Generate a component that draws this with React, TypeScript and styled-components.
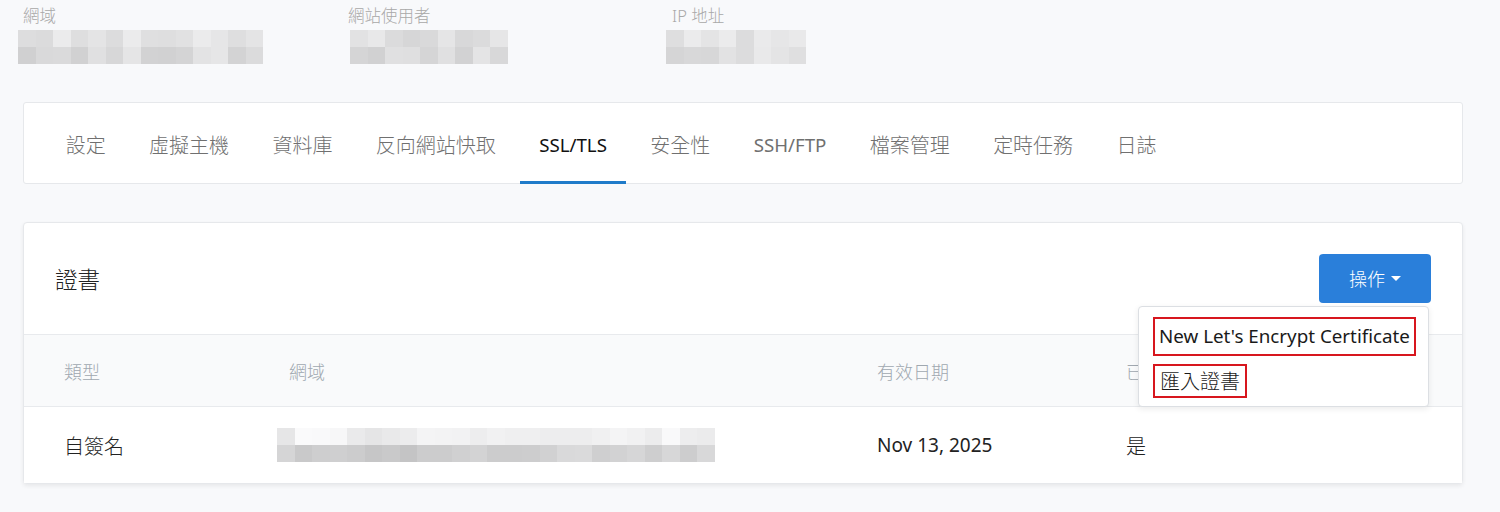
import { styled, createGlobalStyle } from 'styled-components';

const GlobalStyle = createGlobalStyle`
  html, body {
    margin: 0;
    padding: 0;
    background: #f8f9fb;
  }
  body {
    font-family: "Noto Sans", "Noto Sans CJK TC", sans-serif;
    color: #333;
  }
  * {
    box-sizing: border-box;
  }
`;

const Page = styled.div`
  width: 1500px;
  height: 512px;
  padding-left: 23px;
  padding-right: 37px;
  overflow: hidden;
`;

const InfoRow = styled.div`
  display: flex;
  flex-direction: row;
  padding-top: 4px;
  height: 102px;
`;

const InfoItem = styled.div<{ $width: number }>`
  width: ${(p) => p.$width}px;
  display: flex;
  flex-direction: column;
  row-gap: 2px;
`;

const InfoLabel = styled.div`
  font-size: 16.5px;
  line-height: 24px;
  color: #a8a8a8;
  font-weight: 300;
`;

const BlurGrid = styled.div<{ $cols: number; $cell: number; $shift: number }>`
  display: grid;
  grid-template-columns: repeat(${(p) => p.$cols}, ${(p) => p.$cell}px);
  grid-auto-rows: 17px;
  margin-left: ${(p) => p.$shift}px;
  filter: blur(0.6px);
`;

const BlurCell = styled.div`
  width: 100%;
  height: 100%;
`;

function shades(seed: number, count: number, base: number, spread: number) {
  const out: string[] = [];
  let s = seed;
  for (let i = 0; i < count; i += 1) {
    s = (s * 9301 + 49297) % 233280;
    const v = Math.round(base + (s / 233280) * spread);
    out.push(`rgb(${v},${v},${v + 1})`);
  }
  return out;
}

function Blurred({
  cols,
  cell,
  shift,
  seed,
  base,
  rows = 2,
}: {
  cols: number;
  cell: number;
  shift: number;
  seed: number;
  base: number[];
  rows?: number;
}) {
  const cells: string[] = [];
  for (let r = 0; r < rows; r += 1) {
    cells.push(...shades(seed + r * 17, cols, base[r], 22));
  }
  return (
    <BlurGrid $cols={cols} $cell={cell} $shift={shift}>
      {cells.map((c, i) => (
        <BlurCell key={i} style={{ background: c }} />
      ))}
    </BlurGrid>
  );
}

const Card = styled.div`
  background: #fff;
  border: 1px solid #e6e8eb;
  border-radius: 3px;
`;

const TabCard = styled(Card)`
  height: 82px;
  display: flex;
  flex-direction: row;
  align-items: stretch;
  padding-left: 20px;
`;

const Tab = styled.div<{ $active?: boolean; $latin?: boolean }>`
  display: flex;
  align-items: center;
  margin: 0 2.7px -1px;
  padding: 4px 19px 0;
  font-size: ${(p) => (p.$latin ? 18.7 : 20)}px;
  font-weight: ${(p) => (p.$latin ? 400 : 300)};
  color: ${(p) => (p.$active ? '#111' : '#707070')};
  border-bottom: 3px solid ${(p) => (p.$active ? '#1f7bc9' : 'transparent')};
  white-space: nowrap;
`;

const CertCard = styled(Card)`
  margin-top: 38px;
  box-shadow: 0 2px 4px rgba(0, 0, 0, 0.07);
  border-radius: 4px;
`;

const CardHeader = styled.div`
  height: 112px;
  display: flex;
  flex-direction: row;
  align-items: center;
  justify-content: space-between;
  padding: 0 31px 0 31px;
  border-bottom: 1px solid #e8eaed;
`;

const CardTitle = styled.h2`
  margin: 0;
  font-size: 22.5px;
  font-weight: 300;
  color: #222;
`;

const ActionWrap = styled.div`
  position: relative;
  margin-top: -1px;
`;

const ActionButton = styled.button`
  width: 112px;
  height: 49px;
  border: none;
  border-radius: 4px;
  background: #2a7fda;
  color: #fff;
  font-family: inherit;
  font-size: 18px;
  font-weight: 300;
  display: flex;
  align-items: center;
  justify-content: center;
  column-gap: 6px;
  cursor: pointer;
`;

const Caret = styled.span`
  width: 0;
  height: 0;
  border-left: 5px solid transparent;
  border-right: 5px solid transparent;
  border-top: 5px solid #fff;
  margin-top: 1px;
`;

const Menu = styled.div`
  position: absolute;
  top: calc(100% + 3px);
  right: 2px;
  width: 291px;
  background: #fff;
  border: 1px solid #dcdfe3;
  border-radius: 4px;
  box-shadow: 0 2px 6px rgba(0, 0, 0, 0.08);
  padding: 10px 0 8px 14px;
  display: flex;
  flex-direction: column;
  align-items: flex-start;
  row-gap: 8px;
  z-index: 10;
`;

const MenuItem = styled.div<{ $height: number; $latin?: boolean }>`
  height: ${(p) => p.$height}px;
  display: flex;
  align-items: center;
  padding: 0 ${(p) => (p.$latin ? 4 : 5)}px;
  border: 2px solid #d7161e;
  font-size: ${(p) => (p.$latin ? 18.8 : 20)}px;
  font-weight: ${(p) => (p.$latin ? 400 : 300)};
  color: #1a1a1a;
  white-space: nowrap;
`;

const TableRow = styled.div<{ $head?: boolean }>`
  display: grid;
  grid-template-columns: 225px 588px 249px 1fr;
  align-items: center;
  height: ${(p) => (p.$head ? 72 : 76)}px;
  padding-left: 40px;
  background: ${(p) => (p.$head ? '#f9fafb' : '#fff')};
  border-bottom: ${(p) => (p.$head ? '1px solid #e8eaed' : 'none')};
  color: ${(p) => (p.$head ? '#a0a8b0' : '#222')};
`;

const Cell = styled.div<{ $size: number; $latin?: boolean }>`
  font-size: ${(p) => p.$size}px;
  font-weight: ${(p) => (p.$latin ? 400 : 300)};
  white-space: nowrap;
`;

const tabs = ['設定', '虛擬主機', '資料庫', '反向網站快取', 'SSL/TLS', '安全性', 'SSH/FTP', '檔案管理', '定時任務', '日誌'];

export default function App() {
  return (
    <>
      <GlobalStyle />
      <Page>
        <InfoRow>
          <InfoItem $width={325}>
            <InfoLabel>網域</InfoLabel>
            <Blurred cols={14} cell={17.5} shift={-5} seed={3} base={[214, 208]} />
          </InfoItem>
          <InfoItem $width={324}>
            <InfoLabel>網站使用者</InfoLabel>
            <Blurred cols={9} cell={17.5} shift={2} seed={11} base={[212, 206]} />
          </InfoItem>
          <InfoItem $width={300}>
            <InfoLabel>IP 地址</InfoLabel>
            <Blurred cols={8} cell={17.5} shift={-6} seed={29} base={[214, 212]} />
          </InfoItem>
        </InfoRow>

        <TabCard>
          {tabs.map((t) => (
            <Tab key={t} $active={t === 'SSL/TLS'} $latin={t.startsWith('SS')}>
              {t}
            </Tab>
          ))}
        </TabCard>

        <CertCard>
          <CardHeader>
            <CardTitle>證書</CardTitle>
            <ActionWrap>
              <ActionButton>
                操作
                <Caret />
              </ActionButton>
              <Menu>
                <MenuItem $height={39} $latin>
                  New Let's Encrypt Certificate
                </MenuItem>
                <MenuItem $height={34}>匯入證書</MenuItem>
              </Menu>
            </ActionWrap>
          </CardHeader>
          <TableRow $head>
            <Cell $size={18}>類型</Cell>
            <Cell $size={18}>網域</Cell>
            <Cell $size={18}>有效日期</Cell>
            <Cell $size={18}>已</Cell>
          </TableRow>
          <TableRow>
            <Cell $size={20}>自簽名</Cell>
            <Cell $size={19}>
              <Blurred cols={25} cell={17.5} shift={-12} seed={47} base={[228, 196]} />
            </Cell>
            <Cell $size={19} $latin>
              Nov 13, 2025
            </Cell>
            <Cell $size={20}>是</Cell>
          </TableRow>
        </CertCard>
      </Page>
    </>
  );
}
